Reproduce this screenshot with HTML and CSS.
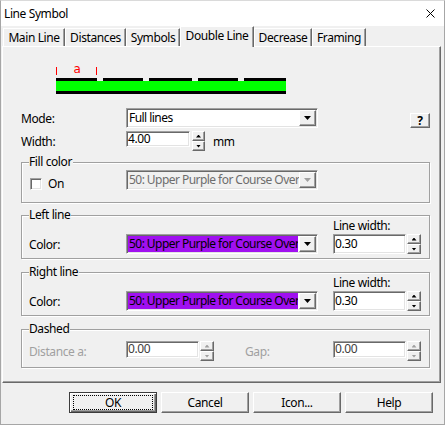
FILE: index.html
```html
<!DOCTYPE html>
<html lang="en">
<head>
<meta charset="utf-8">
<title>Line Symbol</title>
<link rel="stylesheet" href="styles.css">
</head>
<body>
<div class="window">
  <div class="titlebar">
    <span class="title">Line Symbol</span>
    <svg class="close" width="9" height="9" viewBox="0 0 9 9"><path d="M0.5 0.5L8.5 8.5M8.5 0.5L0.5 8.5" stroke="#000" stroke-width="1" fill="none"/></svg>
  </div>

  <div class="tabs">
    <div class="tab t-main">Main Line</div>
    <div class="tab t-dist">Distances</div>
    <div class="tab t-sym">Symbols</div>
    <div class="tab t-double active">Double Line</div>
    <div class="tab t-dec">Decrease</div>
    <div class="tab t-frame">Framing</div>
  </div>

  <div class="panel">
    <!-- sample of the double line with its dash distance marker -->
    <svg class="preview" width="232" height="35" viewBox="0 0 232 35">
      <rect x="0" y="7" width="1" height="8" fill="#f00"/>
      <rect x="40" y="7" width="1" height="8" fill="#f00"/>
      <text class="dist-mark" x="17.5" y="12.5">a</text>
      <g fill="#000">
        <rect x="0" y="18" width="41" height="3"/>
        <rect x="47" y="18" width="40" height="3"/>
        <rect x="93" y="18" width="43" height="3"/>
        <rect x="142" y="18" width="40" height="3"/>
        <rect x="188" y="18" width="42" height="3"/>
        <rect x="0" y="31" width="230" height="3"/>
      </g>
      <rect x="0" y="21" width="230" height="10" fill="#0f0"/>
    </svg>

    <div class="row mode-row">
      <span class="lbl">Mode:</span>
      <div class="combo">
        <span class="combo-text">Full lines</span>
        <span class="drop"></span>
      </div>
      <button class="qbtn">?</button>
    </div>

    <div class="row width-row">
      <span class="lbl">Width:</span>
      <div class="spin spin-narrow">
        <div class="field short16">4.00</div>
        <div class="spin-btns"><span class="sbtn up"></span><span class="sbtn down"></span></div>
      </div>
      <span class="unit">mm</span>
    </div>

    <div class="group g-fill">
      <span class="legend">Fill color</span>
      <div class="fill-row">
        <label class="check"><span class="box"></span>On</label>
        <div class="combo disabled">
          <span class="combo-text">50: Upper Purple for Course Over</span>
          <span class="drop"></span>
        </div>
      </div>
    </div>

    <div class="group g-line">
      <span class="legend">Left line</span>
      <div class="line-grid">
        <span class="lw-label">Line width:</span>
        <span class="color-label">Color:</span>
        <div class="combo">
          <span class="combo-text purple">50: Upper Purple for Course Over</span>
          <span class="drop"></span>
        </div>
        <div class="spin">
          <div class="field">0.30</div>
          <div class="spin-btns"><span class="sbtn up"></span><span class="sbtn down"></span></div>
        </div>
      </div>
    </div>

    <div class="group g-line g-right">
      <span class="legend">Right line</span>
      <div class="line-grid">
        <span class="lw-label">Line width:</span>
        <span class="color-label">Color:</span>
        <div class="combo">
          <span class="combo-text purple">50: Upper Purple for Course Over</span>
          <span class="drop"></span>
        </div>
        <div class="spin">
          <div class="field">0.30</div>
          <div class="spin-btns"><span class="sbtn up"></span><span class="sbtn down"></span></div>
        </div>
      </div>
    </div>

    <div class="group g-dashed">
      <span class="legend">Dashed</span>
      <div class="dash-row">
        <span class="dlbl">Distance a:</span>
        <div class="spin off">
          <div class="field short17">0.00</div>
          <div class="spin-btns"><span class="sbtn up"></span><span class="sbtn down"></span></div>
        </div>
        <span class="dlbl gap-lbl">Gap:</span>
        <div class="spin off">
          <div class="field short17">0.00</div>
          <div class="spin-btns"><span class="sbtn up"></span><span class="sbtn down"></span></div>
        </div>
      </div>
    </div>
  </div>

  <div class="buttons">
    <button class="btn default">OK</button>
    <button class="btn">Cancel</button>
    <button class="btn">Icon...</button>
    <button class="btn">Help</button>
  </div>
</div>
</body>
</html>
```

FILE: styles.css
```css
* {
  box-sizing: border-box;
}

html,
body {
  margin: 0;
  padding: 0;
}

body {
  background: #f0f0f0;
  font-family: "Noto Sans", "Open Sans", sans-serif;
  font-size: 12px;
  line-height: 15px;
  letter-spacing: -0.4px;
  color: #000;
}

button {
  letter-spacing: inherit;
}

/* ---------- window frame ---------- */
.window {
  width: 445px;
  height: 425px;
  border: 1px solid #a6a6a6;
  border-top-color: #dadada;
  background: #f0f0f0;
}

.titlebar {
  height: 25px;
  background: #fff;
  display: flex;
  align-items: center;
  justify-content: space-between;
  padding: 0 9px 0 3px;
}

.close {
  display: block;
}

/* ---------- tab strip ---------- */
.tabs {
  display: flex;
  align-items: flex-end;
  height: 20px;
  padding-left: 2px;
}

.tab {
  height: 18px;
  border: 1px solid;
  border-color: #fff #696969 transparent #fff;
  border-bottom: 0;
  box-shadow: inset -1px 0 #a0a0a0;
  text-align: center;
  line-height: 17px;
  white-space: nowrap;
}

.tab.active {
  position: relative;
  z-index: 1;
  height: 21px;
  margin-bottom: -1px;
  background: #f0f0f0;
}

.t-main { width: 62px; }
.t-dist { width: 61px; }
.t-sym { width: 54px; }
.t-double { width: 74px; }
.t-dec { width: 58px; }
.t-frame { width: 54px; }

/* ---------- page panel ---------- */
.panel {
  margin-left: 1px;
  width: 439px;
  height: 337px;
  border: 1px solid;
  border-color: #fff #696969 #696969 #fff;
  box-shadow: inset -1px -1px #a0a0a0;
}

.preview {
  display: block;
  margin: 13px 0 0 53px;
}

.dist-mark {
  font-family: "DejaVu Sans", sans-serif;
  font-size: 12px;
  fill: #f00;
}

/* ---------- shared controls ---------- */
.combo {
  display: flex;
  width: 192px;
  height: 20px;
  border: 1px solid;
  border-color: #a0a0a0 #fff #fff #a0a0a0;
  box-shadow: inset 1px 1px #696969, inset -1px -1px #e3e3e3;
  padding: 1px;
  background: #fff;
}

.combo-text {
  flex: 1;
  overflow: hidden;
  white-space: nowrap;
  padding-left: 1px;
  line-height: 16px;
  letter-spacing: -0.55px;
}

.combo-text.purple {
  background: #a010f0;
  margin-right: 1px;
}

.drop {
  flex: none;
  width: 17px;
  height: 16px;
  border: 1px solid;
  border-color: #fff #696969 #696969 #fff;
  box-shadow: inset -1px -1px #a0a0a0;
  background: #f0f0f0;
  display: flex;
  align-items: center;
  justify-content: center;
}

.drop::after {
  content: "";
  width: 7px;
  height: 4px;
  background: #000;
  clip-path: polygon(0 0, 100% 0, 50% 100%);
}

.combo.disabled {
  background: #f0f0f0;
  color: #6d6d6d;
}

.combo.disabled .drop::after {
  background: #a0a0a0;
}

.field {
  height: 20px;
  width: 73px;
  border: 1px solid;
  border-color: #a0a0a0 #fff #fff #a0a0a0;
  box-shadow: inset 1px 1px #696969, inset -1px -1px #e3e3e3;
  background: #fff;
  padding: 0 1px;
  line-height: 17px;
}

.field.short16 {
  height: 16px;
  line-height: 13px;
}

.field.short17 {
  height: 17px;
  line-height: 14px;
}

.spin {
  display: flex;
  align-items: flex-start;
  width: 88px;
}

.spin-btns {
  display: flex;
  flex-direction: column;
  margin-left: 1px;
}

.sbtn {
  width: 14px;
  height: 10px;
  border: 1px solid;
  border-color: #fff #696969 #696969 #fff;
  box-shadow: inset -1px -1px #a0a0a0;
  background: #f0f0f0;
  display: flex;
  align-items: center;
  justify-content: center;
}

.sbtn::after {
  content: "";
  width: 5px;
  height: 3px;
  background: #000;
}

.sbtn.up::after {
  clip-path: polygon(50% 0, 100% 100%, 0 100%);
}

.sbtn.down::after {
  clip-path: polygon(0 0, 100% 0, 50% 100%);
}

.spin.off .field {
  color: #404040;
}

.spin.off .sbtn::after {
  background: #a0a0a0;
}

.spin-narrow {
  width: auto;
}

.spin-narrow .field {
  width: 64px;
}

.spin-narrow .spin-btns {
  margin-left: 2px;
}

.spin-narrow .sbtn {
  width: 13px;
}

/* ---------- top rows ---------- */
.row {
  display: flex;
  align-items: center;
  margin-left: 18px;
  height: 20px;
}

.lbl {
  width: 105px;
}

.mode-row {
  margin-top: 13px;
}

.qbtn {
  align-self: flex-end;
  margin-left: 92px;
  width: 20px;
  height: 15px;
  padding: 0;
  font-family: inherit;
  font-size: 12px;
  font-weight: bold;
  line-height: 12px;
  color: #000;
  border: 1px solid;
  border-color: #fff #696969 #696969 #fff;
  box-shadow: inset -1px -1px #a0a0a0;
  background: #f0f0f0;
}

.width-row {
  margin-top: 3px;
  align-items: flex-start;
}

.width-row .lbl {
  align-self: center;
}

.unit {
  margin-left: 8px;
  align-self: center;
}

/* ---------- group boxes ---------- */
.group {
  position: relative;
  margin-left: 18px;
  width: 409px;
  border: 1px solid #a0a0a0;
  box-shadow: inset 1px 1px #fff, 1px 1px #fff;
  padding: 0 7px;
}

.legend {
  position: absolute;
  top: -8px;
  left: 7px;
  padding-right: 1px;
  background: #f0f0f0;
  line-height: 14px;
}

.g-fill {
  margin-top: 11px;
  height: 41px;
  padding-top: 7px;
}

.fill-row {
  display: flex;
  align-items: flex-start;
}

.check {
  display: flex;
  align-items: center;
  width: 97px;
  padding-left: 1px;
  margin-top: 6px;
}

.box {
  width: 12px;
  height: 12px;
  margin-right: 6px;
  border: 1px solid;
  border-color: #a0a0a0 #fff #fff #a0a0a0;
  box-shadow: inset 1px 1px #696969, inset -1px -1px #e3e3e3;
  background: #fff;
}

.g-line {
  margin-top: 12px;
  height: 44px;
  padding-top: 2px;
}

.g-right {
  margin-top: 13px;
}

.line-grid {
  display: grid;
  grid-template-columns: 97px 192px 15px 88px;
  grid-template-rows: 15px 20px;
  row-gap: 1px;
  align-items: center;
}

.lw-label {
  grid-column: 4;
  grid-row: 1;
}

.color-label {
  grid-column: 1;
  grid-row: 2;
}

.line-grid .combo {
  grid-column: 2;
  grid-row: 2;
}

.line-grid .spin {
  grid-column: 4;
  grid-row: 2;
}

.g-dashed {
  margin-top: 13px;
  height: 39px;
  padding-top: 11px;
}

.dash-row {
  display: flex;
  align-items: center;
  height: 20px;
}

.dlbl {
  width: 97px;
  color: #a0a0a0;
}

.dlbl.gap-lbl {
  width: 119px;
  padding-left: 31px;
}

.dash-row .spin {
  align-self: flex-start;
}

/* ---------- dialog buttons ---------- */
.buttons {
  display: flex;
  gap: 4px;
  margin-top: 9px;
  padding-left: 68px;
}

.btn {
  position: relative;
  width: 88px;
  height: 21px;
  padding: 0;
  font-family: inherit;
  font-size: 12px;
  line-height: 17px;
  color: #000;
  background: #f0f0f0;
  border: 1px solid;
  border-color: #fff #696969 #696969 #fff;
  box-shadow: inset -1px -1px #a0a0a0;
}

.btn.default {
  border-color: #3c3c3c;
  box-shadow: inset 1px 1px #fff, inset -1px -1px #696969, inset -2px -2px #a0a0a0;
}

.btn.default::after {
  content: "";
  position: absolute;
  inset: 2px 3px;
  border: 1px dotted #000;
}
```
